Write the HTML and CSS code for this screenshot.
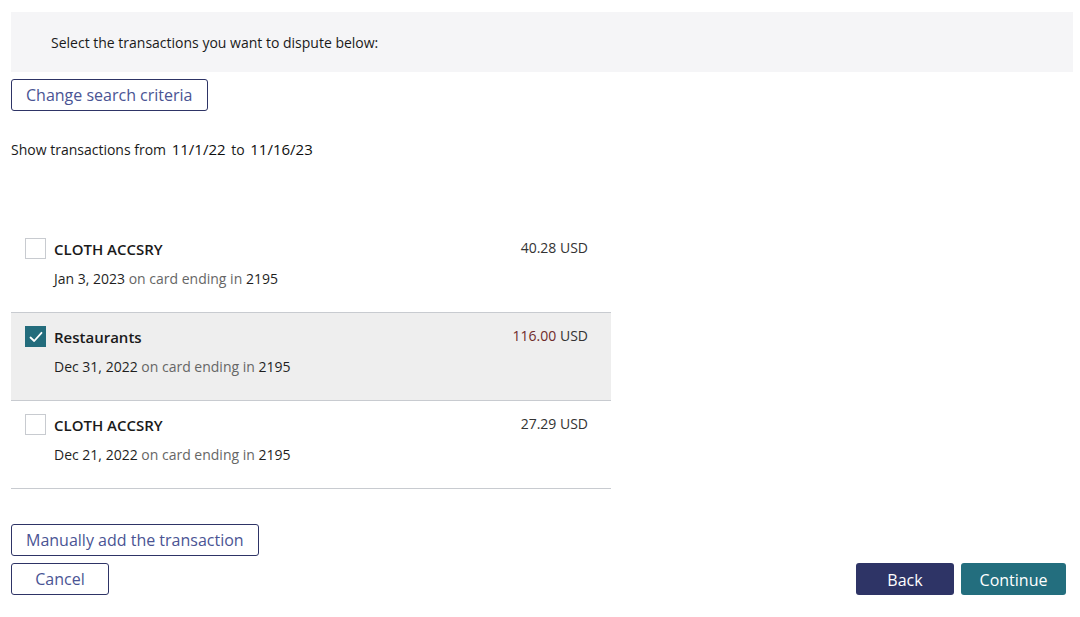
FILE: index.html
```html
<!DOCTYPE html>
<html>
<head>
<meta charset="utf-8">
<link rel="stylesheet" href="styles.css">
</head>
<body>
<div class="page">
  <div class="banner">Select the transactions you want to dispute below:</div>
  <div class="row-btn"><button class="btn-outline">Change search criteria</button></div>
  <p class="range">Show transactions from <span class="date">11/1/22</span> to <span class="date">11/16/23</span></p>
  <div class="list">
    <div class="txn">
      <span class="check"></span>
      <div class="info">
        <div class="title">CLOTH ACCSRY</div>
        <div class="sub"><span class="dk">Jan 3, 2023</span> on card ending in <span class="dk">2195</span></div>
      </div>
      <div class="amount">40.28 USD</div>
    </div>
    <div class="txn selected">
      <span class="check on"><svg width="14" height="14" viewBox="0 0 14 14"><path d="M1.5 7.5 L5.2 11 L12.5 2.8" fill="none" stroke="#fff" stroke-width="1.8" stroke-linecap="round" stroke-linejoin="round"/></svg></span>
      <div class="info">
        <div class="title">Restaurants</div>
        <div class="sub"><span class="dk">Dec 31, 2022</span> on card ending in <span class="dk">2195</span></div>
      </div>
      <div class="amount"><span class="neg">116.00</span> USD</div>
    </div>
    <div class="txn">
      <span class="check"></span>
      <div class="info">
        <div class="title">CLOTH ACCSRY</div>
        <div class="sub"><span class="dk">Dec 21, 2022</span> on card ending in <span class="dk">2195</span></div>
      </div>
      <div class="amount">27.29 USD</div>
    </div>
  </div>
  <div class="row-btn manual"><button class="btn-outline">Manually add the transaction</button></div>
  <div class="footer">
    <button class="btn-outline cancel">Cancel</button>
    <div class="right">
      <button class="btn back">Back</button>
      <button class="btn continue">Continue</button>
    </div>
  </div>
</div>
</body>
</html>
```
FILE: styles.css
```css
* { box-sizing: border-box; }
html, body { margin: 0; padding: 0; background: #fff; }
body { font-family: "Open Sans", "Noto Sans", sans-serif; color: #1f1f1f; }
.page { padding: 12px 7px 0 11px; width: 1080px; }
.banner {
  background: #f5f5f7;
  height: 60px;
  padding-left: 40px;
  display: flex;
  align-items: center;
  font-size: 14px;
  color: #1a1a1a;
}
.row-btn { margin-top: 7px; }
button { font-family: inherit; cursor: pointer; }
.btn-outline {
  height: 32px;
  background: #fff;
  border: 1px solid #2e3466;
  border-radius: 3px;
  color: #4a5494;
  font-size: 16px;
  padding: 0 14px;
  line-height: 30px;
}
.range { margin: 27px 0 0; font-size: 14px; line-height: 22px; color: #1a1a1a; }
.date { font-size: 15px; color: #0f0f0f; font-weight: 500; margin: 0 2px; }
.list { margin-top: 64px; width: 600px; }
.txn {
  display: flex;
  align-items: flex-start;
  height: 88px;
  padding: 13px 23px 0 14px;
  border-bottom: 1px solid #c8cbd0;
}
.txn.selected { background: #eeeeee; }
.check {
  width: 21px; height: 21px;
  border: 1px solid #c8cbd0;
  background: #fff;
  flex: none;
  display: flex; align-items: center; justify-content: center;
}
.check.on { background: #236c7c; border-color: #236c7c; }
.info { margin-left: 8px; flex: 1; }
.title { font-size: 15px; font-weight: 600; line-height: 22px; color: #1a1a1a; }
.sub { margin-top: 9px; font-size: 14px; line-height: 20px; color: #666; }
.dk { color: #1f1f1f; }
.amount { font-size: 14px; line-height: 20px; color: #333; }
.neg { color: #6e2a2a; }
.manual { margin-top: 35px; }
.footer { display: flex; justify-content: space-between; align-items: center; margin-top: 7px; padding-right: 7px; }
.cancel { width: 98px; padding: 0; }
.right { display: flex; gap: 7px; }
.btn {
  height: 32px;
  border: none;
  border-radius: 3px;
  color: #fff;
  font-size: 16px;
  line-height: 32px;
}
.back { background: #2e3466; width: 98px; }
.continue { background: #236e7e; width: 105px; }
```
